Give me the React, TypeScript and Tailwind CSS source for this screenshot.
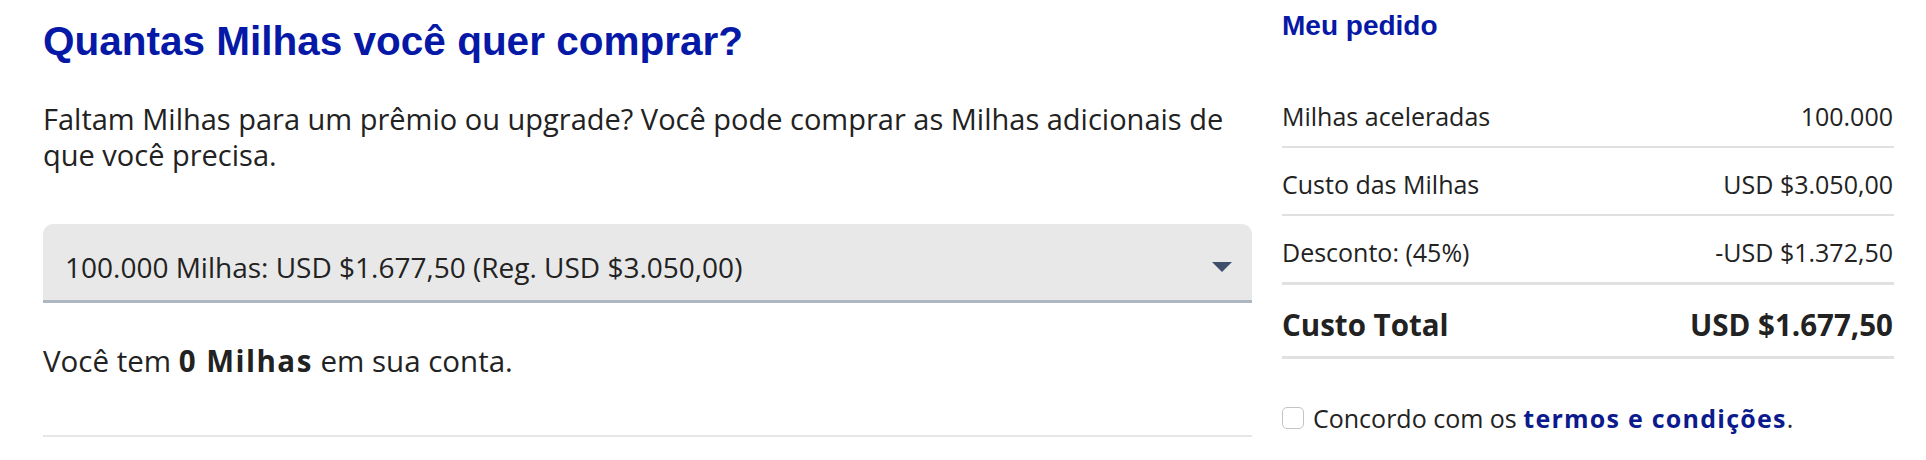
import React from "react";

const rows = [
  { label: "Milhas aceleradas", value: "100.000", line: "border-b-2" },
  { label: "Custo das Milhas", value: "USD $3.050,00", line: "border-b-2" },
  { label: "Desconto: (45%)", value: "-USD $1.372,50", line: "border-b-[3px]" },
];

const App = () => {
  return (
    <div className="w-[1926px] h-[460px] bg-white flex pl-[43px] pr-[32px] font-['Open_Sans',sans-serif] text-[#222]">
      <div className="w-[1209px] shrink-0 flex flex-col">
        <h1 className="pt-[17px] text-[40.5px] leading-[48px] font-bold text-[#0619a6] font-['Liberation_Sans',Arial,sans-serif]">
          Quantas Milhas você quer comprar?
        </h1>
        <p className="mt-[36px] text-[29px] leading-[36px] pr-[10px]">
          Faltam Milhas para um prêmio ou upgrade? Você pode comprar as Milhas adicionais de que você precisa.
        </p>
        <div className="mt-[51px] bg-[#e8e8e8] rounded-t-[10px] border-b-[3px] border-[#aeb6c0] pl-[22px] pr-[20px] pt-[25px] pb-[15px]">
          <div className="flex items-center justify-between h-[36px]">
            <span className="text-[28px] leading-[36px]">
              100.000 Milhas: USD $1.677,50 (Reg. USD $3.050,00)
            </span>
            <svg width="20" height="10" viewBox="0 0 20 10">
              <polygon points="0,0 20,0 10,10" fill="#3d4f6a" />
            </svg>
          </div>
        </div>
        <p className="mt-[40px] text-[29.5px] leading-[36px]">
          Você tem <span className="font-bold tracking-wider">0 Milhas</span> em sua conta.
        </p>
        <div className="mt-[56px] border-t-2 border-[#e6e6e6]" />
      </div>

      <div className="ml-[30px] flex-1 flex flex-col">
        <h2 className="pt-[9px] text-[28px] leading-[34px] font-bold text-[#0619a6] font-['Liberation_Sans',Arial,sans-serif]">
          Meu pedido
        </h2>
        <div className="mt-[37px] flex flex-col">
          {rows.map((r) => (
            <div
              key={r.label}
              className={`flex justify-between pt-[19px] pb-[13px] border-[#e0e0e0] text-[25px] leading-[34px] pr-[1px] ${r.line}`}
            >
              <span>{r.label}</span>
              <span>{r.value}</span>
            </div>
          ))}
          <div className="flex justify-between pt-[21px] pb-[12px] border-b-[3px] border-[#e0e0e0] text-[29.5px] leading-[38px] font-bold pr-[1px]">
            <span>Custo Total</span>
            <span>USD $1.677,50</span>
          </div>
        </div>
        <label className="mt-[42px] flex items-center gap-[9px] text-[25px] leading-[34px]">
          <span className="w-[22px] h-[22px] rounded-[5px] border border-[#c4c4c4] bg-white shrink-0" />
          <span>
            Concordo com os{" "}
            <a className="font-bold tracking-wider text-[#0b1a8c]">termos e condições</a>.
          </span>
        </label>
      </div>
    </div>
  );
};

export default App;
